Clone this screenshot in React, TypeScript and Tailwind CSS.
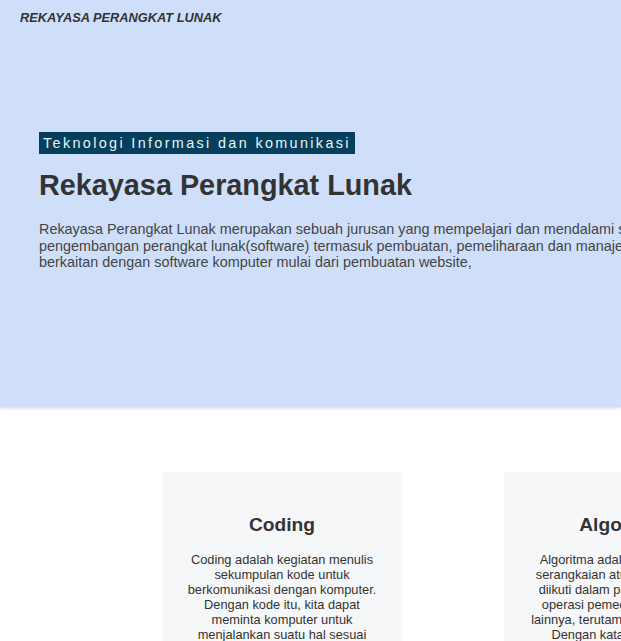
import React from "react";

export default function App() {
  return (
    <div className="w-full overflow-hidden bg-white text-[#333]" style={{ fontFamily: "Arial, 'Liberation Sans', sans-serif" }}>
      <section className="h-[407px] bg-[#cfdffa] shadow-[0_1px_3px_rgba(120,120,200,0.35)]">
        <div className="px-[20px] pt-[10px] text-[12.8px] font-bold italic leading-[16px] text-[#333]">
          REKAYASA PERANGKAT LUNAK
        </div>
        <div className="pl-[39px] pt-[105px]">
          <div className="inline-block bg-[#053f5b] px-[4px] py-[3px] text-[14.4px] leading-[16px] tracking-[2.35px] whitespace-nowrap text-[#e8f4f4]">
            Teknologi Informasi dan komunikasi
          </div>
          <h1 className="mt-[14px] text-[28.8px] font-bold leading-[33px] whitespace-nowrap text-[#333]">
            Rekayasa Perangkat Lunak
          </h1>
          <p className="mt-[19px] text-[14.4px] leading-[16.5px] whitespace-nowrap text-[#444]">
            Rekayasa Perangkat Lunak merupakan sebuah jurusan yang mempelajari dan mendalami semua cara-cara
            <br />
            pengembangan perangkat lunak(software) termasuk pembuatan, pemeliharaan dan manajemen organisasi
            <br />
            berkaitan dengan software komputer mulai dari pembuatan website,
          </p>
        </div>
      </section>
      <section className="flex gap-[102px] pl-[162px] pt-[65px] pb-10 w-[1200px]">
        <div className="w-[240px] shrink-0 bg-[#f6f7f9] px-[25px] pt-[42px] pb-10 text-center">
          <h2 className="text-[19.2px] font-bold leading-[22px] text-[#333]">Coding</h2>
          <p className="mt-[16px] text-[12.8px] leading-[15px] text-[#333]">
            Coding adalah kegiatan menulis sekumpulan kode untuk berkomunikasi dengan komputer. Dengan kode itu, kita dapat meminta komputer untuk menjalankan suatu hal sesuai keinginan kita.
          </p>
        </div>
        <div className="w-[240px] shrink-0 bg-[#f6f7f9] px-[25px] pt-[42px] pb-10 text-center">
          <h2 className="text-[19.2px] font-bold leading-[22px] text-[#333]">Algoritma</h2>
          <p className="mt-[16px] text-[12.8px] leading-[15px] text-[#333]">
            Algoritma adalah sekumpulan serangkaian aturan yang harus diikuti dalam perhitungan atau operasi pemecahan masalah lainnya, terutama oleh komputer. Dengan kata lain, sebuah algoritmanya adalah urutan langkah logis.
          </p>
        </div>
      </section>
    </div>
  );
}
